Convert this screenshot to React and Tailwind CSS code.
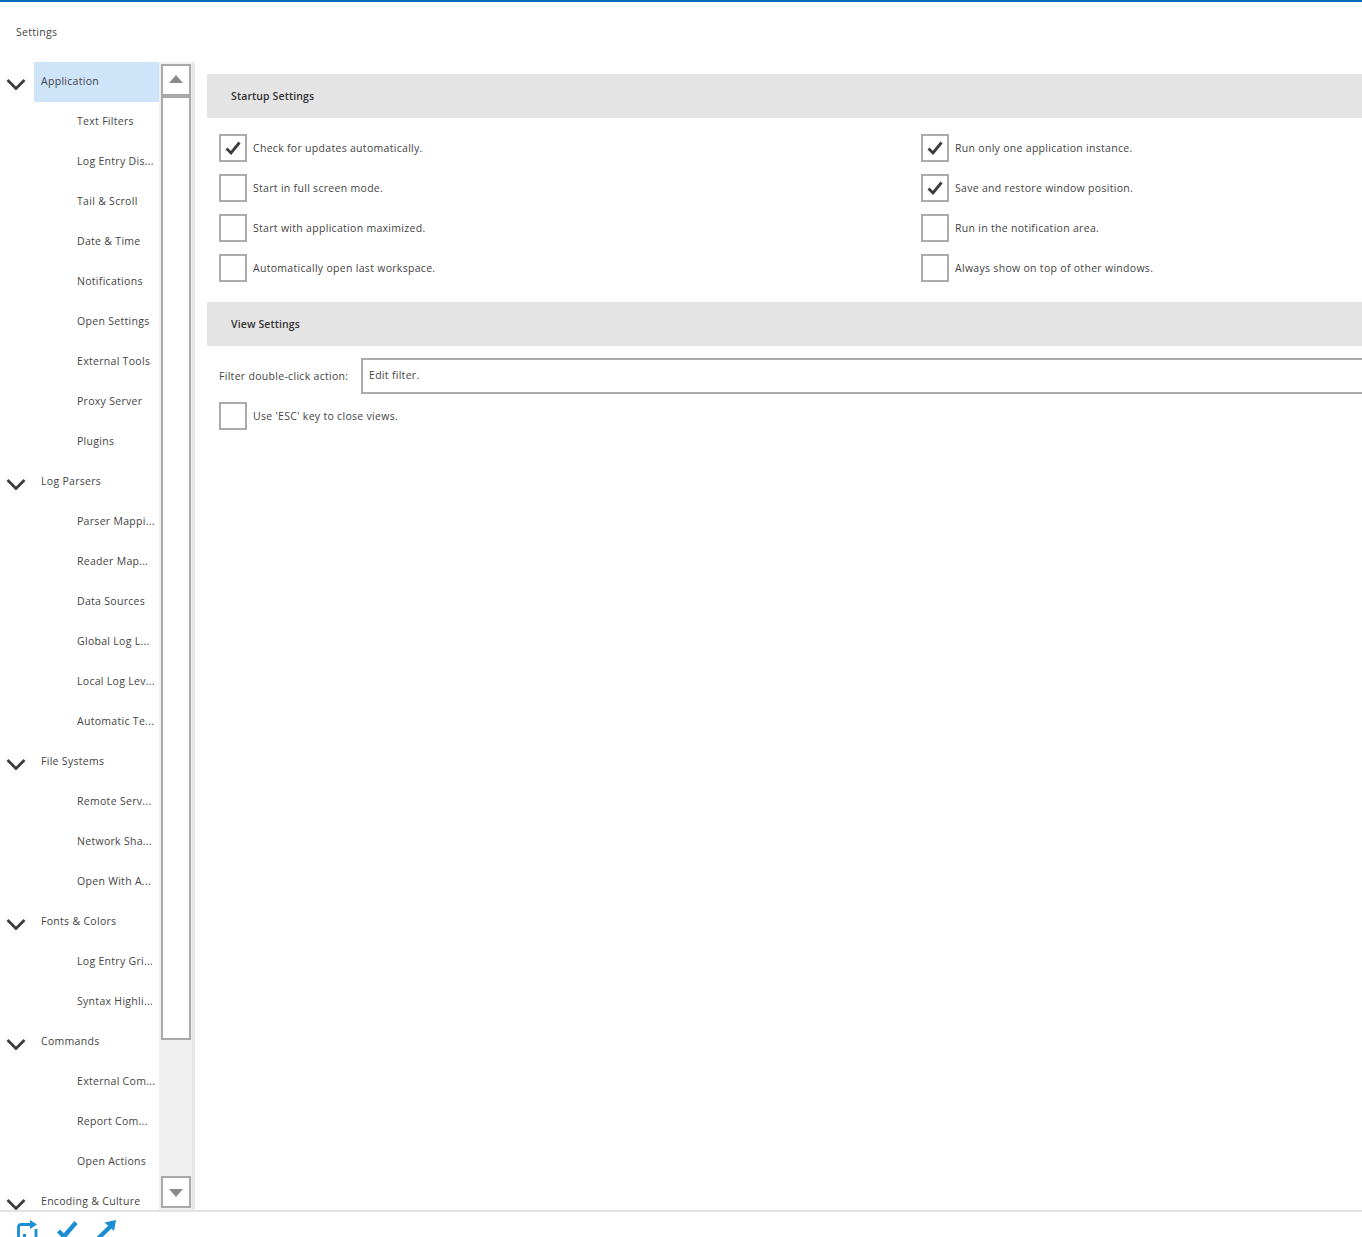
import React from 'react';

const tree = [
  { label: 'Application', selected: true, children: ['Text Filters', 'Log Entry Dis...', 'Tail & Scroll', 'Date & Time', 'Notifications', 'Open Settings', 'External Tools', 'Proxy Server', 'Plugins'] },
  { label: 'Log Parsers', children: ['Parser Mappi...', 'Reader Map...', 'Data Sources', 'Global Log L...', 'Local Log Lev...', 'Automatic Te...'] },
  { label: 'File Systems', children: ['Remote Serv...', 'Network Sha...', 'Open With A...'] },
  { label: 'Fonts & Colors', children: ['Log Entry Gri...', 'Syntax Highli...'] },
  { label: 'Commands', children: ['External Com...', 'Report Com...', 'Open Actions'] },
  { label: 'Encoding & Culture', children: [] },
];

const startupLeft = [
  { label: 'Check for updates automatically.', checked: true },
  { label: 'Start in full screen mode.' },
  { label: 'Start with application maximized.' },
  { label: 'Automatically open last workspace.' },
];

const startupRight = [
  { label: 'Run only one application instance.', checked: true },
  { label: 'Save and restore window position.', checked: true },
  { label: 'Run in the notification area.' },
  { label: 'Always show on top of other windows.' },
];

function Chevron() {
  return (
    <svg width="20" height="12" viewBox="0 0 20 12" fill="none" className="mt-[6px] shrink-0">
      <path d="M1.5 1 L10 9.5 L18.5 1" stroke="#3f3f3f" strokeWidth="2.8" />
    </svg>
  );
}

function Check({ label, checked }) {
  return (
    <div className="flex h-7 items-center gap-[6px]">
      <div className="flex h-7 w-7 shrink-0 items-center justify-center border-2 border-[#ababab] bg-white">
        {checked && (
          <svg width="16" height="14" viewBox="0 0 16 14" fill="none">
            <path d="M1.5 7.5 L6 12 L14.5 1.5" stroke="#3c3c3c" strokeWidth="2.8" />
          </svg>
        )}
      </div>
      <span className="whitespace-nowrap pt-[2px]">{label}</span>
    </div>
  );
}

function SectionHeader({ title }) {
  return (
    <div className="flex h-11 items-center bg-[#e4e4e4] pl-6 pt-[2px] text-[10.5px] font-semibold tracking-[0.12px] text-[#333]">
      {title}
    </div>
  );
}

function ScrollButton({ up }) {
  return (
    <div className={`flex h-8 justify-center border-2 border-[#a9a9a9] bg-white ${up ? 'items-start pt-[9px]' : 'items-end pb-[9px]'}`}>
      <svg width="14" height="8" viewBox="0 0 14 8">
        <path d={up ? 'M7 0 L14 8 L0 8 Z' : 'M0 0 L14 0 L7 8 Z'} fill="#8a8a8a" />
      </svg>
    </div>
  );
}

export default function App() {
  return (
    <div
      className="flex h-[1237px] flex-col overflow-hidden border-t-2 border-[#0a6cb8] bg-white text-[10.5px] tracking-[0.3px] text-[#444]"
      style={{ fontFamily: '"Open Sans", "Noto Sans", sans-serif' }}
    >
      {/* Title */}
      <div className="flex h-[60px] shrink-0 items-start pl-4 pt-[22px] leading-4">Settings</div>

      <div className="flex h-[1148px] shrink-0">
        {/* Tree */}
        <div className="w-[159px] shrink-0 overflow-hidden">
          {tree.map((group) => (
            <div key={group.label}>
              <div className="flex h-10 items-center">
                <div className="flex w-[34px] justify-center pr-[2px]">
                  <Chevron />
                </div>
                <div className={`flex h-10 flex-1 items-center pl-[7px] ${group.selected ? 'bg-[#cde4f9]' : ''}`}>
                  {group.label}
                </div>
              </div>
              {group.children.map((child) => (
                <div key={child} className="flex h-10 items-center whitespace-nowrap pl-[77px]">
                  {child}
                </div>
              ))}
            </div>
          ))}
        </div>

        {/* Scrollbar */}
        <div className="flex w-[36px] shrink-0 flex-col border-r-[3px] border-[#e6e6e6] bg-[#f0f0f0] pb-[2px] pl-[2px] pr-[1px] pt-[2px]">
          <ScrollButton up />
          <div className="h-[944px] border-2 border-[#a9a9a9] bg-white" />
          <div className="flex-1" />
          <ScrollButton />
        </div>

        {/* Settings */}
        <div className="min-w-0 flex-1 overflow-hidden pl-3 pt-3">
          <SectionHeader title="Startup Settings" />
          <div className="flex pb-5 pl-3 pt-4">
            <div className="flex w-[702px] shrink-0 flex-col gap-3">
              {startupLeft.map((item) => (
                <Check key={item.label} {...item} />
              ))}
            </div>
            <div className="flex flex-col gap-3">
              {startupRight.map((item) => (
                <Check key={item.label} {...item} />
              ))}
            </div>
          </div>
          <SectionHeader title="View Settings" />
          <div className="flex flex-col gap-2 pl-3 pt-3">
            <div className="flex h-9 items-center">
              <span className="w-[142px] shrink-0 whitespace-nowrap pt-[2px]">Filter double-click action:</span>
              <div className="-mr-1 flex h-9 flex-1 items-start border-2 border-[#ababab] pl-[6px] pt-[7px] leading-4">
                Edit filter.
              </div>
            </div>
            <Check label="Use 'ESC' key to close views." />
          </div>
        </div>
      </div>

      {/* Footer toolbar */}
      <div className="flex flex-1 items-start gap-[19px] overflow-hidden border-t-2 border-[#e3e3e3] pl-[17px] pt-2">
        <svg width="21" height="22" viewBox="0 0 21 22" fill="none" className="shrink-0">
          <path d="M13 4.5 H4 Q1.5 4.5 1.5 7 V17 M6 15.5 H9 M19 9 V17" stroke="#1b8ed6" strokeWidth="2.8" />
          <path d="M13 0 L20 4.5 L13 9 Z" fill="#1b8ed6" />
        </svg>
        <svg width="21" height="22" viewBox="0 0 21 22" fill="none" className="shrink-0">
          <path d="M1.5 11 L7 16.5 L19 2.5" stroke="#1b8ed6" strokeWidth="4.4" />
        </svg>
        <svg width="20" height="22" viewBox="0 0 20 22" fill="none" className="shrink-0">
          <path d="M1.5 18 L14 6" stroke="#1b8ed6" strokeWidth="4.4" />
          <path d="M7.5 2.5 L19 0 L17 11 Z" fill="#1b8ed6" />
        </svg>
      </div>
    </div>
  );
}
